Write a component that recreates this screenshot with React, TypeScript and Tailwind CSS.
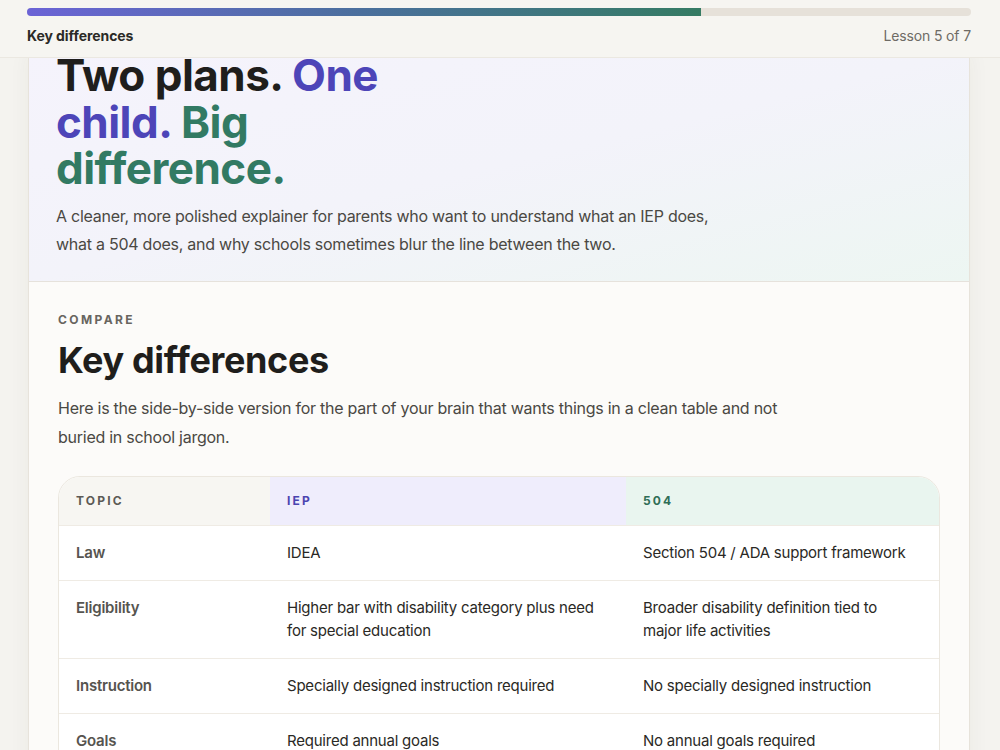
interface Row {
  topic: string
  iep: string
  plan504: string
}

const ROWS: Row[] = [
  { topic: 'Law', iep: 'IDEA', plan504: 'Section 504 / ADA support framework' },
  {
    topic: 'Eligibility',
    iep: 'Higher bar with disability category plus need for special education',
    plan504: 'Broader disability definition tied to major life activities',
  },
  { topic: 'Instruction', iep: 'Specially designed instruction required', plan504: 'No specially designed instruction' },
  { topic: 'Goals', iep: 'Required annual goals', plan504: 'No annual goals required' },
  { topic: 'Services', iep: 'Special education and related services', plan504: 'Accommodations and modifications' },
]

export default function App(): React.JSX.Element {
  return (
    <div className="h-[750px] overflow-hidden bg-[#f4f3ef] font-['Inter',sans-serif] text-[#222120]">
      {/* Sticky lesson header */}
      <header className="relative z-10 h-[58px] border-b border-[#ebe8e1] bg-[#f6f5f1] pl-[27px] pr-[29px] pt-2">
        <div className="h-2 w-full overflow-hidden rounded-full bg-[#e6e1d9]">
          <div className="h-full w-[71.43%] bg-gradient-to-r from-[#6b63d6] via-[#4a6f9c] to-[#357b63]" />
        </div>
        <div className="mt-[10px] flex items-center justify-between text-sm leading-5">
          <span className="font-bold tracking-[-0.005em] text-[#2b2a27]">Key differences</span>
          <span className="tracking-[-0.01em] text-[#6e6b65]">Lesson 5 of 7</span>
        </div>
      </header>

      <main className="-mt-[6px] ml-[28px] w-[942px]">
        <div className="border-x border-[#e7e3db] bg-[#fcfbf9] shadow-[0_0_20px_rgba(60,50,30,0.05)]">
          {/* Hero */}
          <section className="border-b border-[#e6e2dc] bg-gradient-to-br from-[#f5f3fc] via-[#f3f3fa] to-[#edf6f2] pl-[27px] pr-[28px] pb-[23px]">
            <h1 className="text-[44px] font-bold leading-[46.6px] tracking-[-0.012em] text-[#1f1e1c]">
              Two plans. <span className="text-[#4d45b8]">One</span>
              <br />
              <span className="text-[#4d45b8]">child.</span> <span className="text-[#327a63]">Big</span>
              <br />
              <span className="text-[#327a63]">difference.</span>
            </h1>
            <p className="mt-[10px] max-w-[680px] text-base leading-7 tracking-[-0.016em] text-[#4a4843]">
              A cleaner, more polished explainer for parents who want to understand what an IEP does, what a 504 does,
              and why schools sometimes blur the line between the two.
            </p>
          </section>

          {/* Compare */}
          <section className="px-[29px] pt-[30px] pb-10">
            <p className="text-xs font-bold uppercase leading-4 tracking-[0.2em] text-[#68655f]">Compare</p>
            <h2 className="mt-3 text-[36px] font-bold leading-10 tracking-[-0.01em] text-[#1f1e1c]">Key differences</h2>
            <p className="mt-[14px] max-w-[750px] text-base leading-[29px] tracking-[-0.016em] text-[#4a4843]">
              Here is the side-by-side version for the part of your brain that wants things in a clean table and not
              buried in school jargon.
            </p>

            <div className="mt-6 overflow-hidden rounded-[22px] border border-[#ebe7df] bg-white">
              <div className="grid grid-cols-[211px_356px_1fr] text-xs font-bold uppercase leading-4 tracking-[0.18em]">
                <div className="bg-[#f7f6f2] py-4 pl-[17px] pr-4 text-[#5c5a55]">Topic</div>
                <div className="bg-[#efedfc] py-4 pl-[17px] pr-4 text-[#4b44b0]">IEP</div>
                <div className="bg-[#e9f5ef] py-4 pl-[17px] pr-4 text-[#2f6e57]">504</div>
              </div>
              {ROWS.map((row) => (
                <div
                  key={row.topic}
                  className="grid grid-cols-[211px_356px_1fr] border-t border-[#efebe4] text-[15px] leading-[23px] tracking-[-0.015em]"
                >
                  <div className="py-[15.5px] pl-[17px] pr-4 font-semibold text-[#56544f]">{row.topic}</div>
                  <div className="py-[15.5px] pl-[17px] pr-4 text-[#2a2925]">{row.iep}</div>
                  <div className="py-[15.5px] pl-[17px] pr-[28px] text-[#2a2925]">{row.plan504}</div>
                </div>
              ))}
            </div>
          </section>
        </div>
      </main>
    </div>
  )
}
